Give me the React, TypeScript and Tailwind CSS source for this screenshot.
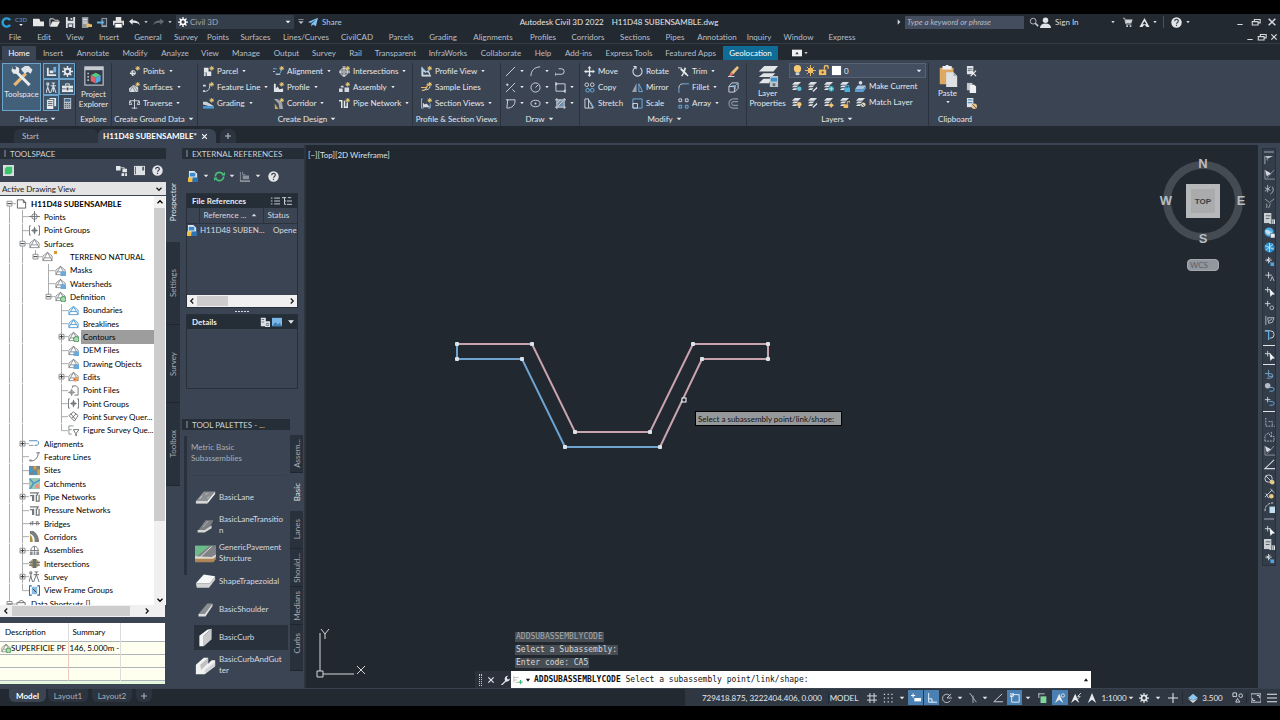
import React from 'react';

const star = <path d="M9.500 0v5M7 2.500h5M7.800.8l3.400 3.400M11.200.8L7.800 4.200" stroke="#f3cf72" strokeWidth="1" />;

const house = <path d="M1 10.500V5.500L6 1.500l5 4v5zM1 10.500l5-9 5 9M3 7.500l6 0" fill="none" stroke="#6d7074" strokeWidth=".8" />;

const sheets = (
  <g fill="#dfe3e7">
    <path d="M4 1h7L8 4H1z" />
    <path d="M3 5h5L6 6.800H1zM3 8h4L5.500 9.800H1z" />
  </g>
);

const lane = (fill: string) => (
  <>
    <path d="M1 16L10 5h13l-9 11z" fill={fill} />
    <path d="M1 16h13v3H1z" fill="#d5d6d6" />
    <path d="M14 16L23 5v3l-9 11z" fill="#f1f1f1" />
    <path d="M5 14l3-4M12 9l2-2M14 13l2-2" stroke="#d5d6d6" />
  </>
);

const line = (d: string, color = '#d5dae0', width = 1) => <path d={d} fill="none" stroke={color} strokeWidth={width} />;

const icons: Record<string, React.ReactNode> = {
  caret: <path d="M2.500 4h7L6 8z" fill="currentColor" />,
  dot: <path d="M3.500 4.500h5L6 8z" fill="currentColor" />,
  logo: <path d="M10 3.500A4.500 4.500 0 1 0 10 8.500" fill="none" stroke="#2d9fd8" strokeWidth="2.600" />,
  newFile: <path d="M0 2h7l1 3h4v5H0z" fill="#e6e6e6" />,
  open: <><path d="M1 10V2h4l1 1.500h4V5" fill="none" stroke="#e6e6e6" /><path d="M1 10.500L3.500 5H12l-3 5.500z" fill="#e6e6e6" /></>,
  save: <><path d="M1 0h10v12H1z" fill="#dcdfe3" /><path d="M3 0h6v4H3zM3 7h6v5H3z" fill="#29323d" /><path d="M4 8h4v3H4zM6 1h2v2H6z" fill="#dcdfe3" /></>,
  saveAs: <><path d="M1 0h7v12H1z" fill="#8e959d" /><path d="M2 2h5v1H2zM2 4h5v1H2zM2 6h5v1H2z" fill="#f0f0f0" /><path d="M6 7h3l1 1h2v3H6z" fill="#eabb60" /></>,
  mobile: <><path d="M5 1h6v10H5z" fill="#9aa3ad" /><path d="M6 2h4v7H6z" fill="#343d49" /><path d="M0 5h5V3l3 3-3 3V7H0z" fill="#62aee2" /></>,
  print: <><path d="M3 0h6v4H3zM0 4h12v5H0z" fill="#e4e4e4" /><path d="M2 7h8v5H2z" fill="#fff" stroke="#333c48" /><path d="M9 5h2v1H9z" fill="#df9d43" /></>,
  undo: <path d="M0 5l4-3.500v2.300c5 0 7 1.600 8 5.200-2-2.500-4-3-8-2.800v2.300z" fill="#e5e8eb" />,
  redo: <path d="M12 5L8 1.500v2.300C3 3.800 1 5.400 0 9c2-2.500 4-3 8-2.800v2.300z" fill="#626b76" />,
  gear: <><circle cx="6" cy="6" r="3" fill="none" stroke="currentColor" strokeWidth="2" /><path d="M6 0v2.500M6 9.500V12M0 6h2.500M9.500 6H12M1.800 1.800l1.700 1.700M8.500 8.500l1.700 1.700M10.200 1.800L8.500 3.500M3.500 8.500l-1.700 1.700" stroke="currentColor" strokeWidth="1.500" /></>,
  custom: <><path d="M2 2h8v1H2z" fill="currentColor" /><path d="M2 5h8L6 9z" fill="currentColor" /></>,
  plane: <path d="M0 6l12-5-2.500 10-3.500-2-2 2.500V8l6-5-7 4.300z" fill="#7fc3f2" />,
  right: <path d="M4 2l4 4-4 4z" fill="currentColor" />,
  search: <><circle cx="5" cy="5" r="3.500" fill="none" stroke="#c6cbd1" /><path d="M7.500 7.500L11 11" stroke="#c6cbd1" strokeWidth="2" /></>,
  user: <><circle cx="6" cy="3.500" r="3" fill="#e0e4e8" /><path d="M0 12c0-3 2-5 6-5s6 2 6 5z" fill="#e0e4e8" /></>,
  cart: <><path d="M0 1.500h2l1.500 7H10" fill="none" stroke="#cfd4da" /><path d="M2.500 3H11.500L10 7.500H3.500z" fill="#cfd4da" /><path d="M4 10h2v2H4zM8 10h2v2H8z" fill="#cfd4da" /></>,
  autodesk: <path d="M6 1l5.500 10H8.500L6 8.500 3.500 11H.5zM6 4.500L4 8h4z" fill="#e2e5e9" fillRule="evenodd" />,
  help: <><circle cx="6" cy="6" r="5.700" fill="#e3e5e8" /><path d="M4 4.500C4 2 8 2 8 4.400 8 6 6 5.800 6 7.400M6 8.500v1.300" fill="none" stroke="#3a4350" strokeWidth="1.300" /></>,
  min: <path d="M2 9h8v1.500H2z" fill="currentColor" />,
  restore: <path d="M4 5V3h7v4H9M1.500 5.500h7v4h-7z" fill="none" stroke="currentColor" strokeWidth="1.300" />,
  close: <path d="M2 2l8 8M10 2l-8 8" stroke="currentColor" strokeWidth="1.800" />,
  plus: <path d="M6 2.500v7M2.500 6h7" stroke="currentColor" strokeWidth="1.300" />,
  bigPlus: <path d="M6 0v12M0 6h12" stroke="currentColor" strokeWidth="1.300" />,
  ribbonBox: <><path d="M0 2h12v8H0z" fill="#eef0f2" /><path d="M4 7.500h4L6 4.500z" fill="#333c48" /></>,

  palette1: <><path d="M1 2h2v7h8v2H1zM4 5h4v3H4z" fill="#e4e7ea" /><path d="M8 1h3v6H8z" fill="#6db0e2" /></>,
  survey: <path d="M1 1h2v2H1zM2 3v3M6 1h4M8 1v3M5 4h6M8 4L5 12M8 4l3 8M8 4v7M2 5L0 12M2 6l2 6" fill="none" stroke="#d8dde2" strokeWidth="1.100" />,
  toolbox: <><path d="M0 4h12v7H0z" fill="#e4e7ea" /><path d="M4 4V2h4v2M0 7h12" fill="none" stroke="#e4e7ea" /><path d="M0 7h4v1H0zM8 7h4v1H8zM5 6h2v3H5z" fill="#3a4554" /></>,
  form: <><path d="M1 2h7v10H1zM4 0h7v9H9V1H4z" fill="#e8eaec" /><path d="M2 4h5M2 6h5M2 8h5" stroke="#5b646f" /></>,
  calc: <><path d="M2 0h8v12H2z" fill="#b9bfc6" /><path d="M3 1h6v3H3z" fill="#3f6c96" /><path d="M3 6h6M3 8h6M3 10h6" stroke="#4c545e" strokeDasharray="1.500 .7" /></>,

  points: <>{line('M4 5v6M1 8h6', '#e0e4e8', 1.2)}<circle cx="4.500" cy="7.500" r="2.500" fill="none" stroke="#e0e4e8" />{star}</>,
  surfaces: <><path d="M0 7l5-4 5 3v5H0z" fill="#d7dbdf" /><path d="M0 11l4-6 3 6M5 3l5 8" stroke="#5b6470" strokeWidth=".7" fill="none" />{star}</>,
  traverse: line('M6 1v11M1 3h10M1 3L0 7h3zM11 3L9 7h3zM3 11h6', '#d5dae0'),
  parcel: <><path d="M1 2h5v4h3v5H4V7H1z" fill="#e4e7ea" /><path d="M1 7h2v4H1z" fill="#d5dae0" />{star}</>,
  feature: <>{line('M1 10c5 1 7-3 6-8')}<path d="M0 3h3v2H0zM0 9h2v2H0z" fill="#d5dae0" />{star}</>,
  grading: <><path d="M0 4l4 0 8 5H7L0 7z" fill="#cdd2d7" /><path d="M0 9l12 0v2.500H0z" fill="#4ba0dc" />{star}</>,
  alignment: <>{line('M0 3h4M3 8c3 3 7-1 5-4', '#63b4ee')}{line('M0 6h2M3 9h5')}{star}</>,
  profile: <><path d="M1 2v9h10V7L7 8 5 5 3 7V2z" fill="#e0e3e7" />{star}</>,
  corridor: <><path d="M1 1l5 5 1 6h4L10 6 5 1z" fill="#a0a5aa" /><path d="M2 12V6l4 6z" fill="#c6a75b" />{star}</>,
  intersection: <><path d="M4 0h3v12H4zM0 5h12v3H0z" fill="#a0a5aa" /><circle cx="5.500" cy="6.500" r="4" fill="none" stroke="#d5d8dc" />{star}</>,
  assembly: <><path d="M0 7h4v4H0zM6 6h5v5H6zM2 4h3v2H2z" fill="#d5dae0" />{star}</>,
  pipe: <>{line('M0 3h3v8M6 3v8M6 10h3V5', '#e4e7ea', 1.6)}{star}</>,
  profileView: <><path d="M1 1v10h10M2 10V5l3 2 3-2 2 5z" fill="#8ec2e8" stroke="#dfe4e8" />{star}</>,
  sample: <>{line('M0 6h6M1 9c4 1 6-3 6-7', '#eab66a', 1.3)}{line('M4 8c3 1 5 0 6-3')}{star}</>,
  section: <><path d="M2 10V5l2 2 2-1 4 4z" fill="#d5dae0" />{line('M2 1H.5v10H3M10 6v5H8', '#8ec2e8')}{star}</>,

  drawLine: line('M1 11L11 1'),
  arc: line('M1 11C1 5 5 1 11 1'),
  polyline: line('M0 9h7a3 3 0 0 0 0-6H4M0 7v4'),
  construct: line('M1 11L11 1M1 3h3M2.500 1.500v3M8 8l3 3'),
  circle: <><circle cx="6" cy="6" r="5" fill="none" stroke="#d5dae0" />{line('M6 6l3-3')}</>,
  rect: line('M1 2h10v8H1zM0 1h2v2H0zM10 9h2v2h-2z'),
  poly: line('M2 2h9c0 6-3 9-9 9M1 2h2l-1 9'),
  ellipse: <><ellipse cx="6" cy="6" rx="5" ry="3.500" fill="none" stroke="#d5dae0" /><circle cx="6" cy="6" r="1" fill="#d5dae0" /></>,
  hatch: <><path d="M2 2h8v8H2z" fill="#6f8ca6" />{line('M2 0v12M10 0v12M0 2h12M0 10h12M2 6l4-4M3 9l6-6')}</>,
  move: <path d="M6 0l2 2.500H6.700V5.300H9.500V4L12 6 9.500 8V6.700H6.700V9.500H8L6 12 4 9.500h1.300V6.700H2.500V8L0 6l2.500-2v1.300h2.800V2.500H4z" fill="#e4e7ea" />,
  rotate: <>{line('M3 2a5 5 0 1 0 6 0', '#d5dae0', 1.2)}<path d="M1 0h4v4z" fill="#d5dae0" /></>,
  trim: <><path d="M3 3l6 6M8 2L6 8" stroke="#e4e7ea" strokeWidth="2" /><path d="M6 8l-2 3M8 8l3 3" stroke="#e4e7ea" strokeWidth="1.500" />{line('M0 2h4')}</>,
  copy: <><circle cx="3" cy="3" r="2" fill="none" stroke="#d5dae0" /><circle cx="9" cy="3" r="2" fill="none" stroke="#d5dae0" /><circle cx="4" cy="9" r="2" fill="none" stroke="#6cb4e8" /><circle cx="9" cy="9" r="2" fill="none" stroke="#6cb4e8" /></>,
  mirror: <><path d="M5 1v10H0z" fill="#99a2ac" /><path d="M7.500 2v8.500H11.500z" fill="none" stroke="#6cb4e8" /></>,
  fillet: <>{line('M1 12V7', '#6cb4e8')}{line('M1 7c0-4 2-5 5-5')}{line('M6 2h6', '#6cb4e8')}</>,
  stretch: <>{line('M1 1v10h4V1zM5 2l5 9H5')}{line('M7 4l4 7', '#6cb4e8')}</>,
  scale: <>{line('M1 1h10v10H1z', '#6cb4e8')}{line('M1 6h5v5H1z')}</>,
  array: <>{line('M1 1h3v3H1zM8 1h3v3H8z')}{line('M1 8h3v3H1zM8 8h3v3H8z', '#6cb4e8')}</>,
  erase: <><path d="M10 0l2 2-6 7-3-2z" fill="#eec27a" /><path d="M3 7l3 2-3 2H1z" fill="#ef7361" /><path d="M0 11h7v1H0z" fill="#dde1e5" /></>,
  explode: <>{line('M1 5h6v6H1zM1 5l3-4h7v6l-4 4')}{line('M7 5l4-4M4 4h4v4', '#6cb4e8')}</>,
  offset: line('M11 1H6a5 5 0 0 0 0 10h5M11 4H6a2 2 0 0 0 0 4h5', '#8b96a3', 1.2),

  bulb: <><circle cx="6" cy="4" r="4" fill="#f7ca74" /><path d="M4 8h4v3H4z" fill="#cdd1d5" /></>,
  sun: <><circle cx="6" cy="6" r="3" fill="#f3bd61" />{line('M6 0v12M0 6h12M2 2l8 8M10 2l-8 8', '#f3bd61')}</>,
  unlock: <><path d="M1 5h8v6H1z" fill="#f3bd61" />{line('M7 5V2.500a2 2 0 0 1 4 0V4', '#f3bd61', 1.5)}<path d="M4 7h2v2H4z" fill="#574729" /></>,
  white: <path d="M1 1h10v10H1z" fill="#fff" />,
  layOff: <>{sheets}<circle cx="9" cy="8.500" r="2.500" fill="#57c4d8" /></>,
  layIso: <>{sheets}<path d="M6 11l5-5v2l-4 4z" fill="#e7eaee" /></>,
  layFreeze: <>{sheets}<circle cx="9" cy="8.500" r="3" fill="#37a4b5" />{line('M9 6v5M6.500 8.500h5', '#c8f0f6', .8)}</>,
  layLock: <>{sheets}<path d="M6 7h6v5H6z" fill="#47b4dd" />{line('M7.500 7V5h3v2', '#47b4dd')}</>,
  layOn: <>{sheets}<circle cx="9" cy="8" r="2.500" fill="#f4c76f" /><path d="M8 10h2v2H8z" fill="#ddd" /></>,
  layThaw: <>{sheets}<circle cx="9" cy="9" r="2" fill="#f4c76f" />{line('M9 5.500v6.500M5.500 9H12', '#f4c76f', .8)}</>,
  layUnlock: <>{sheets}<path d="M5 8h5v4H5z" fill="#f3bd61" />{line('M9 8V5h3v2', '#f3bd61')}</>,
  layCurrent: <><circle cx="6" cy="2" r="2" fill="#d9dde1" /><path d="M3 5h9L9 9H0z" fill="#a5c6e1" /><path d="M0 9h9l3-4v3l-3 4H0z" fill="#5c9fd1" /></>,
  layMatch: <>{sheets}<circle cx="9" cy="8.500" r="2.500" fill="#e8d6b4" /><path d="M7 7l4 4" stroke="#575f69" /></>,
  cut: <><path d="M1 0h7v9H1z" fill="#dfe2e6" />{line('M2 3h5M2 5h5', '#59626d')}{line('M5 5l6 6M11 5l-6 6', '#f3f4f5', 1.2)}</>,
  copyClip: <><path d="M1 1h6v8H1z" fill="#bfc5cb" /><path d="M4 3h5l2 2v7H4z" fill="#eef0f1" /></>,
  pasteSpec: <><path d="M1 0h7v10H1z" fill="#dfe2e6" />{line('M2 2h5M2 5h5', '#4f91c4', 1.3)}<circle cx="9" cy="9" r="3" fill="#e9c58b" /><path d="M7 7l4 4" stroke="#59626d" /></>,

  green: <><path d="M0 0h12v12H0z" fill="#d8dfe0" /><path d="M2 4l2-2h6v6l-2 2H2z" fill="#39c36b" /></>,
  panes: <><path d="M0 1h5v5H0zM7 4h5v4H7zM6 9h3v3H6zM10 9h2v3h-2z" fill="#e4e7ea" />{line('M5 3h4v2')}</>,
  sidebar: <><path d="M0 1h12v10H0z" fill="#dfe2e5" /><path d="M9 2h2v4H9zM1 2h1v8H1z" fill="#505965" /></>,
  file: line('M1.500 2H8l2.500 3v6h-9zM8 2v3h3', '#565b61'),
  pt: <><circle cx="6" cy="6" r="3" fill="none" stroke="#6d7074" />{line('M6 0v12M0 6h12', '#6d7074')}</>,
  ptGroup: <><circle cx="6" cy="6" r="2" fill="none" stroke="#6d7074" />{line('M6 2v8M2.500 6h7M2 1H.5v10H2M10 1h1.500v10H10', '#6d7074')}</>,
  house,
  houseBlue: <>{house}<path d="M6 7h6v5H6z" fill="#6aa9da" /></>,
  houseGreen: <>{house}<circle cx="9" cy="9" r="3" fill="#a7dbaf" stroke="#3d8d4e" /></>,
  houseLine: line('M1 10.500V5.500L6 1.500l5 4v5zM1 10l5-8 5 8M3 7h6', '#4f9ad2'),
  houseEdit: <>{house}<path d="M6 10l4-4 2 2-4 4z" fill="#eba44c" /><path d="M6 8h2v2H6z" fill="#dd4f45" /></>,
  pointFile: <>{line('M5 3V1h4l2 2v8H7', '#6d7074')}{line('M4 4v8M0 8h8M2 8a2 2 0 1 0 4 0 2 2 0 1 0-4 0', '#6d7074', .8)}</>,
  query: line('M1 5l5-4 5 4-4 6zM3 3l5 6M4 8l5-5', '#6d7074'),
  figure: <>{line('M1 1v9h3M1 1h5M1 5h3', '#8a8e92')}{line('M6 5h6L9 9v3L8 9z', '#6d7074')}</>,
  tAlign: <>{line('M0 3h9a3 3 0 0 1 0 5H6', '#4785b5')}{line('M0 8h5', '#8a8e92')}</>,
  tFeature: line('M1 11c5 0 9-3 9-9M8 2h4M0 10h3', '#64686c'),
  tSites: <><path d="M0 1h12v10H0z" fill="#77858a" /><path d="M0 1l5 5-5 4zM5 8h3v3H5z" fill="#3e9ad3" /><path d="M5 1h3v4H5zM9 5h3v6H9z" fill="#d4a348" /></>,
  tCatch: <><path d="M0 0h12v12H0z" fill="#9bcbb6" />{line('M1 12L5 6 1 1M5 6l7-4', '#4692c8', 1.5)}<path d="M7 7h4v4H7z" fill="#e6957d" /></>,
  tPipe: line('M1 2h8v3M1 5h3v6M5 4v7M8 4v7h3V4M6 2h5', '#74777b', 1.4),
  tBridge: line('M0 6h12M2 4v4M4 4v4M8 4v4M10 4v4M3 4h2M8 4h2', '#74777b'),
  tCorridor: <><path d="M1 0h4c4 3 6 7 6 12H6C7 7 4 4 1 3z" fill="#7c7f7d" /><path d="M1 4c3 2 3 5 3 8H1z" fill="#a89143" /></>,
  tAssembly: <><path d="M1 7h3v4H1zM8 7h3v4H8zM5 7h2v4H5z" fill="#8d9195" />{line('M2 6c0-6 8-6 8 0M1 6h10M6 1v6', '#74777b')}</>,
  tInter: <><circle cx="6" cy="6" r="5" fill="#b9ac82" /><path d="M4 1h4v10H4zM0 4h12v1.500H0zM0 7h12v1.500H0z" fill="#6f7069" /></>,
  tSurvey: line('M1 1h2v2H1zM2 3v4M6 1h4M8 1v3M5 4h6M8 4L5 12M8 4l3 8M2 5L0 12M2 6l2 6', '#64686c'),
  tFrame: <><path d="M3 2h6v8H3z" fill="#86bde6" />{line('M3 1H.5v10H3M9 1h2.500v10H9', '#2e6b9c', 1.2)}<path d="M4 4l4 4" stroke="#333" /></>,
  tData: line('M1 10V4h9v6M3 4c0-3 5-3 6 0M1 8h10', '#64686c'),

  dwg: <><path d="M1 0h6l3 3v6H1z" fill="#dce7f0" /><path d="M2 2h6v4H2z" fill="#3a8ccc" /><path d="M0 7h5v5H0z" fill="#f1bd45" /><path d="M5 7h6v5H5z" fill="#2c73b4" /></>,
  refresh: <>{line('M1.500 6A4.500 4.500 0 0 1 10 4M10.500 6A4.500 4.500 0 0 1 2 8', '#49c27a', 1.7)}<path d="M8 5h4V1zM4 7H0v4z" fill="#49c27a" /></>,
  path: <><path d="M1 1h1v9h10v2H1zM4 5h7v4H4z" fill="#89919b" />{line('M4 1v3h3', '#89919b')}</>,
  list: line('M1 2.500h2M5 2.500h7M1 6h2M5 6h7M1 9.500h2M5 9.500h7', '#d5dae0', 1.1),
  treeList: line('M0 2h5M3 2v8h2M3 6h2M6 6h6M6 10h6M7 2h4', '#d5dae0', 1.1),
  details: <><path d="M1 1h6v10H1zM6 5h6v7H6z" fill="#dfe2e5" />{line('M2 3h3M2 6h3M7 8h4M7 10h4', '#58616c')}</>,
  preview: <><path d="M0 1h12v10H0z" fill="#7ab7e6" /><path d="M0 11l4-5 3 3 2-2 3 4z" fill="#3f83b8" /></>,
  chevUp: line('M3 7.500l3-3 3 3', 'currentColor', 1.5),
  chevDown: line('M3 4.500l3 3 3-3', 'currentColor', 1.5),
  chevLeft: line('M7.500 3l-3 3 3 3', 'currentColor', 1.5),
  chevRight: line('M4.500 3l3 3-3 3', 'currentColor', 1.5),

  wrench: <path d="M1 12l5-5C5 4 6 1 10 1L8 3l1 2h2l1-1c0 3-2 4-5 4l-5 5z" fill="currentColor" />,
  prompt: <>{line('M1 1v8M1 3h6M1 6h4M3 9h3', '#b3b7bb')}{line('M9 6v5M6.500 8.500h5', '#43b871', 1.3)}</>,

  tri1: <><path d="M1 1h9L4 4z" fill="#bcc2c9" />{line('M1 1v9M3 4l1 2', '#a9b0b8')}</>,
  tri2: <><path d="M1 1l7 4-5 3z" fill="#d5dae0" />{line('M1 1v10h11M3 10l8-9', '#8d959f')}</>,
  ptStar: <path d="M4 1v8M1 4l6 3M1 8l6-5M9 3c2 3 1 6-2 8" fill="none" stroke="#b4bbc3" />,
  ptPath: line('M1 1l5 4 5-4M3 6v5M7 6l-2 5', '#9ca4ad'),
  ptSheet: <><path d="M0 0h8v11H0z" fill="#c9ced3" />{line('M2 3h5M2 6h4', '#535c68')}<path d="M6 7h6v5H6z" fill="#dfe2e6" />{line('M8 7v5M10 7v5', '#535c68')}</>,
  globe: <><circle cx="5.500" cy="5.500" r="5" fill="#49a9e2" /><path d="M1 4c4-3 5 2 8 1L7 9 3 8z" fill="#b9e0f5" /><path d="M7 7h5v5H7z" fill="#e8ebee" stroke="#3b4453" strokeWidth=".6" /></>,
  globe2: <><circle cx="6" cy="6" r="5.500" fill="#2f93d1" />{line('M1 4l10 4M2 9l8-7M6 1v10', '#b9e0f5')}</>,
  ptBlue: <>{line('M5 1v7M1.500 4.500h7M3 3l4 4M7 2L3 6')}<path d="M7 7h4v4H7z" fill="#4fa3df" /></>,
  ptA: <>{line('M5 1v7M1.500 4.500h7')}{line('M7 11l2-5 2 5', '#b7bec6')}</>,
  ptCursor: <>{line('M4 1v6M1 4h6')}<path d="M6 3l6 6-3 .5-2 2.500z" fill="#f1f3f4" /></>,
  ptSearch: <>{line('M4 1v6M1 4h6')}<circle cx="8.500" cy="8.500" r="2" fill="none" stroke="#b7bec6" /></>,
  ptFlag: <>{line('M2 1v10M4 3h7l-2 5-4 1z', '#b4bbc3')}{line('M5 7l4-3', '#b4bbc3')}</>,
  dashCurve: <>{line('M1 2h6a3.500 3.500 0 0 1 0 8H6')}{line('M1 2h4v10', '#65aee0', 1.3)}</>,
  dashLoop: line('M5 1v7h5M1 5h6a2.500 2.500 0 0 1 0 5H3', '#79a9cc'),
  ptLoop: <>{line('M4 1v6M1 4h6')}<path d="M6 6h3a2 2 0 0 1 0 4H6" fill="none" stroke="#65aee0" /></>,
  discLoop: <><circle cx="4" cy="4" r="3" fill="#b4bbc3" /><path d="M6 6h3a2 2 0 0 1 0 4H6" fill="none" stroke="#65aee0" /></>,
  dashAngle: <path d="M2 1v9h10M5 5h4v5" fill="none" stroke="#a7bac6" strokeDasharray="2 1" />,
  dashBox: <path d="M1 11V5l4-3 2 4h4v5zM8 1v5" fill="none" stroke="#a7bac6" strokeDasharray="2 1" />,
  noCircle: <><circle cx="5" cy="5" r="4" fill="none" stroke="#d5dae0" />{line('M2 2l6 6')}<circle cx="9" cy="9" r="2.500" fill="#e9c884" /></>,
  ptGold: <>{line('M1 10l8-8M2 6l3 5M7 1l4 4')}<circle cx="8" cy="9" r="2.500" fill="#e9c884" /></>,
  curveCalc: <><path d="M1 10C1 5 4 1 10 1" fill="none" stroke="#d5dae0" strokeDasharray="3 1" /><path d="M6 5h6v7H6z" fill="#c1def2" /></>,

  grid: line('M3.500 0v12M8.500 0v12M0 3.500h12M0 8.500h12', '#d5dae0', 1.2),
  snap: <path d="M1 1.500h11M1 6h11M1 10.500h11" stroke="#d5dae0" strokeWidth="1.500" strokeDasharray="1.500 3" />,
  dyn: <>{line('M0 3h5M2.500.5v5', '#fff', 1.2)}<path d="M4 6h8v4H4z" fill="#fff" /></>,
  ortho: line('M2 0v11h10M2 7h4v4', '#e8f3fb', 1.2),
  polar: line('M10 4a5 5 0 1 0 0 5M6 6h6M6 6l5-5'),
  iso: line('M2 0l8 11M6 3v9', '#a6aeb7', 1.2),
  angle: line('M11 1L1 10.500h11', '#d5dae0', 1.1),
  osnap: line('M2 2h9v9H2zM0 0h4v4H0z', '#e8f3fb', 1.1),
  quick: <><path d="M3 4h7v8H3z" fill="#7fd79a" />{line('M0 1h8M1 1v5', '#d5dae0')}</>,
  anno: <><path d="M5 1l5 11-5-4-5 4z" fill="#e7eaed" /><circle cx="9.500" cy="3" r="2" fill="none" stroke="#e7eaed" /></>,
  annoAuto: <><path d="M5 1l5 11-5-4-5 4z" fill="#e7eaed" />{line('M12 0L8 4h3L7 8', '#e7eaed')}</>,
  annoPlain: <path d="M6 0l5 12-5-4-5 4z" fill="#e7eaed" />,
  isolate: <>{line('M1 1h4v4H1zM4 11l2-4 2.500 4z', '#d5dae0')}<circle cx="9.500" cy="4" r="2" fill="none" stroke="#d5dae0" /></>,
  stack: <><path d="M0 6l6-5 6 5-6 3z" fill="#8cc7ed" /><path d="M0 7l6 5 6-5-6 2z" fill="#d6dce1" /></>,
  clean: line('M0 1h12v10H0zM2 9V6M2 9h3M10 3v3M7 3h3', '#d5dae0', 1.1),
  menu: line('M0 1.500h12M0 6h12M0 10.500h12', '#e7eaed', 1.4),
};

const Icon: React.FC<{ name: string; className?: string }> = ({ name, className = 'size-3' }) => (
  <svg viewBox="0 0 12 12" className={`shrink-0 ${className}`} aria-hidden="true">{icons[name]}</svg>
);

const IconButton: React.FC<{ name: string; className?: string; icon?: string }> = ({ name, className = '', icon = 'size-[11px]' }) => (
  <button aria-label={name} className={`flex shrink-0 items-center justify-center ${className}`}>
    <Icon name={name} className={icon} />
  </button>
);

const menus = [
  ['File', 'w-[30px]'], ['Edit', 'w-[28px]'], ['View', 'w-[34px]'], ['Insert', 'w-[34px]'], ['General', 'w-[44px]'],
  ['Survey', 'w-[32px]'], ['Points', 'w-[32px]'], ['Surfaces', 'w-[43px]'], ['Lines/Curves', 'w-[58px]'], ['CivilCAD', 'w-[44px]'],
  ['Parcels', 'w-[44px]'], ['Grading', 'w-[40px]'], ['Alignments', 'w-[60px]'], ['Profiles', 'w-[40px]'], ['Corridors', 'w-[50px]'],
  ['Sections', 'w-[44px]'], ['Pipes', 'w-[36px]'], ['Annotation', 'w-[48px]'], ['Inquiry', 'w-[36px]'], ['Window', 'w-[43px]'], ['Express', 'w-[44px]'],
];

const ribbonTabs = [
  ['Home', 'w-[34px]'], ['Insert', 'w-[34px]'], ['Annotate', 'w-[46px]'], ['Modify', 'w-[38px]'], ['Analyze', 'w-[42px]'],
  ['View', 'w-[28px]'], ['Manage', 'w-[44px]'], ['Output', 'w-[37px]'], ['Survey', 'w-[38px]'], ['Rail', 'w-[25px]'],
  ['Transparent', 'w-[55px]'], ['InfraWorks', 'w-[50px]'], ['Collaborate', 'w-[56px]'], ['Help', 'w-[28px]'], ['Add-ins', 'w-[43px]'],
  ['Express Tools', 'w-[58px]'], ['Featured Apps', 'w-[65px]'], ['Geolocation', 'w-[55px]'],
];

const TitleBar = () => (
  <header className="flex h-4 shrink-0 items-center">
    <div className="flex flex-1 items-center">
      <IconButton name="logo" className="w-3" />
      <button className="flex w-[18px] flex-col items-center text-[6px] leading-[5px] font-bold text-[#4c80b3]">
        C3D
        <Icon name="caret" className="size-1.5 text-white" />
      </button>
      <div className="flex items-center">
        {['newFile', 'open', 'save', 'saveAs', 'mobile', 'print', 'undo'].map(name => (
          <IconButton key={name} name={name} className="w-4" />
        ))}
        <IconButton name="dot" className="w-2" icon="size-2" />
        <IconButton name="redo" className="w-4" />
        <IconButton name="dot" className="w-2" icon="size-2" />
      </div>
      <label className="ml-0.5 flex h-3.5 w-[118px] items-center bg-[#343d4a] px-0.5 text-white">
        <Icon name="gear" className="size-2.5" />
        <select aria-label="Workspace" className="ml-0.5 flex-1 appearance-none text-[#a4abb4]">
          <option>Civil 3D</option>
        </select>
        <Icon name="caret" className="size-2" />
      </label>
      <IconButton name="custom" className="w-3.5" icon="size-2" />
      <button className="flex items-center gap-1 text-[#9fd0f3]">
        <Icon name="plane" className="size-2.5" />
        Share
      </button>
    </div>
    <p className="mr-[42px] flex gap-2 text-[#e2e5e9]">
      <span>Autodesk Civil 3D 2022</span>
      <span>H11D48 SUBENSAMBLE.dwg</span>
    </p>
    <div className="flex flex-1 items-center justify-end text-[#d5dae0]">
      <IconButton name="right" className="w-3" icon="size-2" />
      <input aria-label="Search help" placeholder="Type a keyword or phrase" className="mr-1 h-[13px] w-[119px] bg-[#434d5e] px-0.5 italic placeholder:text-[#b5bbc4]" />
      <IconButton name="search" className="w-3" icon="size-2.5" />
      <button className="flex w-[67px] items-center gap-1">
        <Icon name="user" className="size-[11px]" />
        Sign In
      </button>
      <IconButton name="dot" className="w-3" icon="size-2" />
      <IconButton name="cart" className="w-[18px]" icon="size-2.5" />
      <IconButton name="autodesk" className="w-3.5" />
      <IconButton name="dot" className="w-2" icon="size-2" />
      <span className="mx-1 h-3 w-px bg-[#4a525d]" />
      <IconButton name="help" className="w-4" />
      <IconButton name="dot" className="w-2" icon="size-2" />
      <IconButton name="min" className="ml-10 w-4" icon="size-2" />
      <IconButton name="restore" className="w-4" icon="size-2.5" />
      <IconButton name="close" className="w-4" icon="size-2.5" />
    </div>
  </header>
);

const Row: React.FC<{ icon: string; label?: string; caret?: boolean; className?: string }> = ({ icon, label, caret, className = '' }) => (
  <button aria-label={label ?? icon} className={`flex h-4 items-center whitespace-nowrap ${className}`}>
    <Icon name={icon} className="size-[11px]" />
    {label && <span className="ml-[3px]">{label}</span>}
    {caret && <Icon name="dot" className="ml-0.5 size-2" />}
  </button>
);

interface GroupProps {
  title: string;
  className: string;
  caret?: boolean;
  children: React.ReactNode;
}

const Group: React.FC<GroupProps> = ({ title, className, caret, children }) => (
  <section className={`flex shrink-0 flex-col border-r border-[#2b333e] ${className}`}>
    <div className="flex h-12">{children}</div>
    <h2 className="flex h-[15px] items-center justify-center whitespace-nowrap">
      {title}
      {caret && <Icon name="caret" className="ml-0.5 size-2" />}
    </h2>
  </section>
);

const Ribbon = () => (
  <div className="flex h-[66px] shrink-0 bg-[#3b4453] pt-[3px] text-[#e4e8ec]">
    <Group title="Palettes" caret className="w-[76px] pl-0.5">
      <button className="flex w-[39px] flex-col items-center justify-between border border-[#6ba3cc] bg-[#43607b] pt-px pb-2.5">
        <svg viewBox="0 0 24 24" className="size-6" aria-hidden="true">
          <path d="M4 21L16 9" stroke="#eab676" strokeWidth="3.500" />
          <path d="M11 4l4-3h4l4 4-2 4-3-2-3 2-3-3z" fill="#dfe3e6" />
          <path d="M6 7l14 14" stroke="#e7eaec" strokeWidth="3" />
          <path d="M2 1v3l3 1 1-2-1-2 4 2v4L7 9H3L1 6z" fill="#e7eaec" />
        </svg>
        Toolspace
      </button>
      <div className="ml-0.5 grid grid-cols-2 grid-rows-3">
        {['palette1', 'gear', 'survey', 'toolbox', 'form'].map(name => (
          <IconButton key={name} name={name} className="w-4 border border-[#6ba3cc] bg-[#3d5368]" />
        ))}
        <IconButton name="calc" className="w-4" />
      </div>
    </Group>
    <Group title="Explore" className="w-[36px]">
      <button className="flex w-full flex-col items-center pt-[3px] leading-[10px]">
        <svg viewBox="0 0 24 24" className="mb-[3px] size-5 shrink-0" aria-hidden="true">
          <path d="M1 1h22v22H1z" fill="#313a46" stroke="#b5bbc3" strokeWidth="1.500" />
          <path d="M1 1h22v4H1z" fill="#c5cad0" />
          <path d="M4 8h2v2H4zM4 12h2v2H4zM4 16h2v2H4z" fill="#b5bbc3" />
          <path d="M8 11l6-3 6 3-6 3z" fill="#59c981" />
          <path d="M8 11l6 3v7l-6-3z" fill="#e2606a" />
          <path d="M20 11l-6 3v7l6-3z" fill="#51a8e2" />
        </svg>
        Project Explorer
      </button>
    </Group>
    <Group title="Create Ground Data" caret className="w-[86px]">
      <div className="pl-[17px]">
        <Row icon="points" label="Points" caret />
        <Row icon="surfaces" label="Surfaces" caret />
        <Row icon="traverse" label="Traverse" caret />
      </div>
    </Group>
    <Group title="Create Design" caret className="w-[215px] pl-[5px]">
      <div className="w-[70px]">
        <Row icon="parcel" label="Parcel" caret />
        <Row icon="feature" label="Feature Line" caret />
        <Row icon="grading" label="Grading" caret />
      </div>
      <div className="w-[66px]">
        <Row icon="alignment" label="Alignment" caret />
        <Row icon="profile" label="Profile" caret />
        <Row icon="corridor" label="Corridor" caret />
      </div>
      <div>
        <Row icon="intersection" label="Intersections" caret />
        <Row icon="assembly" label="Assembly" caret />
        <Row icon="pipe" label="Pipe Network" caret />
      </div>
    </Group>
    <Group title="Profile & Section Views" className="w-[88px]">
      <div className="pl-2">
        <Row icon="profileView" label="Profile View" caret />
        <Row icon="sample" label="Sample Lines" />
        <Row icon="section" label="Section Views" caret />
      </div>
    </Group>
    <Group title="Draw" caret className="w-[79px]">
      <div className="grid grid-cols-3 gap-x-1 pl-1">
        <Row icon="drawLine" caret />
        <Row icon="arc" caret />
        <Row icon="polyline" />
        <Row icon="construct" caret />
        <Row icon="circle" caret />
        <Row icon="rect" caret />
        <Row icon="poly" caret />
        <Row icon="ellipse" caret />
        <Row icon="hatch" caret />
      </div>
    </Group>
    <Group title="Modify" caret className="w-[167px] pl-1">
      <div className="w-[48px]">
        <Row icon="move" label="Move" />
        <Row icon="copy" label="Copy" />
        <Row icon="stretch" label="Stretch" />
      </div>
      <div className="w-[46px]">
        <Row icon="rotate" label="Rotate" />
        <Row icon="mirror" label="Mirror" />
        <Row icon="scale" label="Scale" />
      </div>
      <div className="w-[50px]">
        <Row icon="trim" label="Trim" caret />
        <Row icon="fillet" label="Fillet" caret />
        <Row icon="array" label="Array" caret />
      </div>
      <div>
        <Row icon="erase" />
        <Row icon="explode" />
        <Row icon="offset" />
      </div>
    </Group>
    <Group title="Layers" caret className="w-[182px]">
      <button className="flex w-[41px] shrink-0 flex-col items-center pt-0.5 leading-[10px]">
        <svg viewBox="0 0 24 24" className="mb-px size-[22px] shrink-0" aria-hidden="true">
          <path d="M8 1h15l-5 6H2zM7 9h13l-4 4H2zM7 15h9l-3 5H2z" fill="#e3e6e9" />
          <path d="M14 12h9v12h-9z" fill="#bcc4cc" />
          <path d="M15 14h7v4h-7z" fill="#3e92cc" />
          <path d="M17 20h3v3h-3z" fill="#626c78" />
        </svg>
        Layer Properties
      </button>
      <div className="flex-1 pr-0.5">
        <label className="ml-px flex h-[15px] items-center gap-0.5 border border-[#566173] bg-[#434e60] px-0.5">
          <Icon name="bulb" className="size-[11px]" />
          <Icon name="sun" className="size-[11px]" />
          <Icon name="unlock" className="size-[11px]" />
          <Icon name="white" className="size-[11px]" />
          <select aria-label="Layer" className="flex-1 appearance-none">
            <option>0</option>
          </select>
          <Icon name="caret" className="size-2" />
        </label>
        {[['layOff', 'layIso', 'layFreeze', 'layLock', 'layCurrent', 'Make Current'], ['layOn', 'layIso', 'layThaw', 'layUnlock', 'layMatch', 'Match Layer']].map(([a, b, c, d, e, label]) => (
          <div key={label} className="flex gap-[5px] pl-[3px]">
            <Row icon={a} />
            <Row icon={b} />
            <Row icon={c} />
            <Row icon={d} />
            <Row icon={e} label={label} />
          </div>
        ))}
      </div>
    </Group>
    <Group title="Clipboard" className="w-[52px] border-r-0">
      <button className="flex w-[37px] flex-col items-center pt-0.5 leading-[10px]">
        <svg viewBox="0 0 24 24" className="mb-px size-[22px]" aria-hidden="true">
          <path d="M3 3h15v18H3z" fill="#dfa862" />
          <path d="M6 1h3l1-1h2l1 1h3v4H6z" fill="#edf0f2" />
          <path d="M10 8h8l4 4v12H10z" fill="#dde1e4" />
          <path d="M18 8v4h4z" fill="#a7aeb5" />
        </svg>
        Paste
        <Icon name="dot" className="size-2" />
      </button>
      <div>
        <Row icon="cut" />
        <Row icon="copyClip" />
        <Row icon="pasteSpec" />
      </div>
    </Group>
  </div>
);

interface Node {
  label: string;
  depth: number;
  icon: string;
  box?: '+' | '-';
  last?: boolean;
  selected?: boolean;
}

const tree: Node[] = [
  { label: 'H11D48 SUBENSAMBLE', depth: 0, icon: 'file', box: '-' },
  { label: 'Points', depth: 1, icon: 'pt' },
  { label: 'Point Groups', depth: 1, icon: 'ptGroup' },
  { label: 'Surfaces', depth: 1, icon: 'house', box: '-' },
  { label: 'TERRENO NATURAL', depth: 2, icon: 'house', box: '-', last: true },
  { label: 'Masks', depth: 3, icon: 'houseBlue' },
  { label: 'Watersheds', depth: 3, icon: 'houseBlue' },
  { label: 'Definition', depth: 3, icon: 'houseGreen', box: '-', last: true },
  { label: 'Boundaries', depth: 4, icon: 'houseLine' },
  { label: 'Breaklines', depth: 4, icon: 'houseLine' },
  { label: 'Contours', depth: 4, icon: 'houseGreen', box: '+', selected: true },
  { label: 'DEM Files', depth: 4, icon: 'houseBlue' },
  { label: 'Drawing Objects', depth: 4, icon: 'houseBlue' },
  { label: 'Edits', depth: 4, icon: 'houseEdit', box: '+' },
  { label: 'Point Files', depth: 4, icon: 'pointFile' },
  { label: 'Point Groups', depth: 4, icon: 'ptGroup' },
  { label: 'Point Survey Quer...', depth: 4, icon: 'query' },
  { label: 'Figure Survey Que...', depth: 4, icon: 'figure', last: true },
  { label: 'Alignments', depth: 1, icon: 'tAlign', box: '+' },
  { label: 'Feature Lines', depth: 1, icon: 'tFeature' },
  { label: 'Sites', depth: 1, icon: 'tSites' },
  { label: 'Catchments', depth: 1, icon: 'tCatch' },
  { label: 'Pipe Networks', depth: 1, icon: 'tPipe', box: '+' },
  { label: 'Pressure Networks', depth: 1, icon: 'tPipe' },
  { label: 'Bridges', depth: 1, icon: 'tBridge' },
  { label: 'Corridors', depth: 1, icon: 'tCorridor' },
  { label: 'Assemblies', depth: 1, icon: 'tAssembly', box: '+' },
  { label: 'Intersections', depth: 1, icon: 'tInter' },
  { label: 'Survey', depth: 1, icon: 'tSurvey', box: '+' },
  { label: 'View Frame Groups', depth: 1, icon: 'tFrame', last: true },
];

const Guide: React.FC<{ d: string; box?: string }> = ({ d, box }) => (
  <svg viewBox="0 0 13 14" className="h-full w-[13px] shrink-0" preserveAspectRatio="none" aria-hidden="true">
    <path d={d} stroke="#a9abad" fill="none" />
    {box && <path d="M4 4.500h5v5H4z" fill="#fff" stroke="#8f9294" />}
    {box && <path d={box === '+' ? 'M4.500 7h4M6.500 5v4' : 'M4.500 7h4'} stroke="#333" />}
  </svg>
);

const TreeRow: React.FC<{ node: Node }> = ({ node }) => {
  const ancestors = Array.from({ length: node.depth }, (_, i) => i);
  const stub = node.depth === 0 ? 'M6.500 7v7M6.500 7h7' : node.last ? 'M6.500 0v7M6.500 7h7' : 'M6.500 0v14M6.500 7h7';
  return (
    <li className="flex min-h-0 flex-1 items-center pl-[3px] whitespace-nowrap">
      {ancestors.map(i => <Guide key={i} d={i < 2 ? 'M6.500 0v14' : ''} />)}
      <Guide d={stub} box={node.box} />
      <Icon name={node.icon} className="size-[11px]" />
      {node.depth === 2 && <span className="mb-2 ml-px w-3"><span className="block size-[3px] bg-[#d49a35]" /></span>}
      <span className={`ml-0.5 flex h-full items-center pl-0.5 ${node.depth === 0 ? 'font-bold' : ''} ${node.selected ? 'flex-1 bg-[#9d9d9d]' : ''}`}>{node.label}</span>
    </li>
  );
};

const SideTab: React.FC<{ label: string; active?: boolean; className?: string }> = ({ label, active, className = '' }) => (
  <button className={`flex items-center justify-center ${active ? 'text-[#dfe3e8]' : 'border-b border-[#1f262f] bg-[#29313c] text-[#a3aab4]'} ${className}`}>
    <span className="rotate-180 whitespace-nowrap [writing-mode:vertical-rl]">{label}</span>
  </button>
);

const PanelTitle: React.FC<{ title: string }> = ({ title }) => (
  <h2 className="flex h-[11px] shrink-0 items-center gap-1 bg-[#252d37] pl-1 whitespace-nowrap text-[#cdd2d8]">
    <span className="h-[7px] w-0.5 bg-[#59626e]" />
    {title}
  </h2>
);

const Toolspace = () => (
  <aside className="flex shrink-0 bg-[#3b4453]">
    <div className="flex w-[166px] flex-col pt-[3px] pb-1">
      <PanelTitle title="TOOLSPACE" />
      <div className="flex h-[23px] shrink-0 items-center gap-[7px] px-[3px]">
        <IconButton name="green" className="mr-auto" />
        <IconButton name="panes" />
        <IconButton name="sidebar" />
        <IconButton name="help" />
      </div>
      <label className="flex h-[13px] shrink-0 items-center bg-[#e4e4e4] px-0.5 text-[#1c1c1c]">
        <select aria-label="View" className="flex-1 appearance-none">
          <option>Active Drawing View</option>
        </select>
        <Icon name="chevDown" className="size-2.5" />
      </label>
      <div className="mt-px flex min-h-0 flex-1 bg-white text-black">
        <div className="flex-1 overflow-hidden pt-px">
          <ul className="flex h-[400px] flex-col">
            {tree.map((node, i) => <TreeRow key={i} node={node} />)}
          </ul>
          <div className="flex h-[14px] items-center pl-[3px]">
            <Guide d="M6.500 0v7h7" box="-" />
            <Icon name="tData" className="size-[11px]" />
            <span className="ml-1">Data Shortcuts []</span>
          </div>
        </div>
        <div className="mr-px flex w-[11px] flex-col items-center bg-[#f0f0f0]">
          <Icon name="chevUp" className="my-px size-2.5" />
          <div className="h-[313px] w-full bg-[#cdcdcd]" />
          <Icon name="chevDown" className="mt-auto size-2.5" />
        </div>
      </div>
      <div className="mr-px flex h-3 shrink-0 items-center bg-[#f0f0f0] text-[#161616]">
        <Icon name="chevLeft" className="mx-px size-2.5" />
        <div className="h-2.5 w-[118px] bg-[#cdcdcd]" />
        <Icon name="chevRight" className="ml-3 size-2.5" />
      </div>
      <table className="mt-1.5 mr-px w-[165px] shrink-0 table-fixed border-collapse bg-[#fffff0] text-left text-black">
        <thead>
          <tr className="h-[18px] bg-white">
            <th className="w-[68px] border-r border-[#dcdcdc] pl-[5px] font-normal">Description</th>
            <th className="w-[52px] border-r border-[#dcdcdc] pl-1 font-normal">Summary</th>
            <th />
          </tr>
        </thead>
        <tbody>
          <tr className="h-[13px] border-y border-[#adb3b9]">
            <td className="border-r border-[#efc9c0] p-0">
              <span className="flex items-center whitespace-nowrap"><Icon name="houseGreen" className="ml-px size-2.5" />SUPERFICIE PF</span>
            </td>
            <td className="border-r border-[#dcdcdc] p-0 pl-px whitespace-nowrap">146, 5.000m -</td>
            <td />
          </tr>
          {['a', 'b'].map(key => (
            <tr key={key} className="h-[13px] border-b border-[#adb3b9]">
              <td className="border-r border-[#efc9c0]" />
              <td className="border-r border-[#dcdcdc]" />
              <td />
            </tr>
          ))}
          <tr className="h-1 bg-[#e4f8dc]"><td colSpan={3} /></tr>
        </tbody>
      </table>
    </div>
    <div className="flex w-[14px] flex-col pt-[17px]">
      <SideTab label="Prospector" active className="h-20" />
      <SideTab label="Settings" className="h-[83px]" />
      <SideTab label="Survey" className="h-[78px]" />
      <SideTab label="Toolbox" className="h-[83px]" />
    </div>
  </aside>
);

const subassemblies = [
  { label: 'BasicLane', art: lane('#8b8e90') },
  { label: 'BasicLaneTransition', art: <><path d="M4 17L12 6h9l-4 8-6 3z" fill="#7b7e80" /><path d="M3 17h8l8-5v3l-8 5H3z" fill="#d5d6d6" /><path d="M9 14l6-7" stroke="#b9bcbe" /></> },
  { label: 'GenericPavementStructure', art: <><path d="M0 3h24v14H0z" fill="#6dbb8b" /><path d="M1 16L17 3h7v11l-5 3z" fill="#808386" /><path d="M0 15l19 1 5-3v5l-4 3H0z" fill="#ddd9d0" /><path d="M0 18h21l3-3v3l-3 4H0z" fill="#ae8656" /><path d="M6 16L19 4" stroke="#eceded" /></> },
  { label: 'ShapeTrapezoidal', art: <><path d="M1 14L10 4l13 2-6 8z" fill="#f7f8f8" /><path d="M1 14h16l6-8v4l-7 9H2z" fill="#d0d2d4" /></> },
  { label: 'BasicShoulder', art: <><path d="M4 17L14 5h6l-9 12z" fill="#8b8e90" /><path d="M4 17h7l9-12v3l-8 12H4z" fill="#dddede" /></> },
  { label: 'BasicCurb', art: <><path d="M5 10l9-7 5-1-9 8v12H5z" fill="#f4f5f5" /><path d="M10 10l9-8v12l-9 8z" fill="#c8cacc" /></>, selected: true },
  { label: 'BasicCurbAndGutter', art: <><path d="M1 11l9-8h5v7l4-4h4v6L11 22H1z" fill="#f1f2f2" /><path d="M6 11l9-8v6l-8 8z" fill="#bfc1c4" /><path d="M11 17l12-9v5l-12 9z" fill="#d4d5d7" /></> },
];

const References = () => (
  <div className="flex h-[271px] shrink-0 flex-col">
    <PanelTitle title="EXTERNAL REFERENCES" />
    <div className="flex h-[34px] shrink-0 items-center pl-[6px] text-[#dfe3e8]">
      <IconButton name="dwg" />
      <IconButton name="caret" className="mx-[3px]" icon="size-2" />
      <IconButton name="refresh" className="ml-px" />
      <IconButton name="caret" className="mx-[3px]" icon="size-2" />
      <IconButton name="path" />
      <IconButton name="caret" className="mx-1" icon="size-2" />
      <IconButton name="help" className="ml-0.5" />
    </div>
    <div className="mr-1.5 ml-1 flex h-[115px] shrink-0 flex-col border border-[#28303a]">
      <h3 className="flex h-[14px] items-center gap-0.5 bg-[#252d37] px-[5px] font-bold text-[#e8ebee]">
        <span className="flex-1">File References</span>
        <Icon name="list" className="size-2.5" />
        <Icon name="treeList" className="size-2.5" />
      </h3>
      <table className="w-full table-fixed border-collapse text-left whitespace-nowrap text-[#d5dae0]">
        <thead>
          <tr className="h-[15px] border-b border-[#2b333e]">
            <th className="w-3 border-r border-[#2b333e]" />
            <th className="w-[64px] border-r border-[#2b333e] p-0 pl-1 font-normal">
              <span className="flex items-center">Reference ...<Icon name="caret" className="ml-1 size-2 rotate-180" /></span>
            </th>
            <th className="p-0 pl-1 font-normal">Status</th>
          </tr>
        </thead>
        <tbody>
          <tr className="h-[14px]">
            <td className="p-0"><Icon name="dwg" className="size-[11px]" /></td>
            <td className="p-0 pl-px">H11D48 SUBEN...</td>
            <td className="p-0 pl-2.5">Opene</td>
          </tr>
        </tbody>
      </table>
      <div className="mt-auto flex h-3 items-center bg-[#f0f0f0] text-[#161616]">
        <Icon name="chevLeft" className="size-2.5" />
        <div className="h-2.5 w-[31px] bg-[#cdcdcd]" />
        <Icon name="chevRight" className="ml-auto size-2.5" />
      </div>
    </div>
    <div className="flex h-[6px] shrink-0 items-center justify-center gap-px pr-0.5">
      {[0, 1, 2, 3, 4].map(i => <span key={i} className="h-px w-0.5 bg-[#d5dae0]" />)}
    </div>
    <div className="mr-1.5 ml-1 h-[75px] shrink-0 border border-[#28303a]">
      <h3 className="flex h-[14px] items-center gap-0.5 bg-[#252d37] pr-px pl-[5px] font-bold text-[#e8ebee]">
        <span className="flex-1">Details</span>
        <Icon name="details" className="size-2.5" />
        <Icon name="preview" className="size-2.5" />
        <Icon name="caret" className="ml-0.5 size-2.5" />
      </h3>
    </div>
  </div>
);

const ToolPalettes = () => (
  <div className="flex min-h-0 flex-1">
    <div className="w-[108px]">
      <PanelTitle title="TOOL PALETTES - ..." />
      <div className="mt-1.5 flex">
        <span className="ml-0.5 h-[139px] w-[3px] shrink-0 bg-[#29313c]" />
        <div className="flex-1 pl-1">
          <p className="mr-1 h-10 border-b border-[#36404d] pt-1.5 leading-[11px] text-[#a8afb9]">Metric Basic<br />Subassemblies</p>
          <ul className="mt-[7px] pl-[3px]">
            {subassemblies.map(item => (
              <li key={item.label} className="flex h-7 items-center">
                <button className={`flex h-[25px] w-[94px] items-center pr-1 text-left ${item.selected ? 'bg-[#29313c]' : ''}`}>
                  <svg viewBox="0 0 24 24" className="mx-px size-[21px] shrink-0" aria-hidden="true">{item.art}</svg>
                  <span className="min-w-0 flex-1 pl-0.5 leading-[11px] break-all text-[#d5dae0]">{item.label}</span>
                </button>
              </li>
            ))}
          </ul>
        </div>
      </div>
    </div>
    <div className="flex w-[13px] flex-col pt-4">
      <SideTab label="Assem..." className="h-[38px]" />
      <SideTab label="Basic" active className="h-[38px]" />
      <SideTab label="Lanes" className="h-[38px]" />
      <SideTab label="Should..." className="h-[38px]" />
      <SideTab label="Medians" className="h-[38px]" />
      <SideTab label="Curbs" className="h-[46px] pb-2" />
    </div>
  </div>
);

const nodes = [[7, 8], [82, 8], [125, 96], [200, 96], [243, 8], [318, 8], [318, 23], [252, 23], [210, 111], [115, 111], [72, 23], [7, 23]];

const Canvas = () => (
  <main className="relative min-w-0 flex-1 bg-[#212830]">
    <p className="px-0.5 pt-1 leading-3 text-[#dde1e5]">[−][Top][2D Wireframe]</p>

    <svg viewBox="0 0 330 120" className="absolute top-[191px] left-[144px] h-[120px] w-[330px]" aria-hidden="true">
      <path d="M7 8h75l43 88h75l43-88h75v15h-66l-42 88" fill="none" stroke="#c9a3ae" strokeWidth="2" />
      <path d="M7 8v15h65l43 88h95" fill="none" stroke="#6ea3d0" strokeWidth="2" />
      {nodes.map(([x, y]) => <rect key={`${x}-${y}`} x={x - 2} y={y - 2} width="4" height="4" rx="1" fill="#dce2e9" />)}
      <rect x="232" y="62" width="4" height="4" fill="#212830" stroke="#fff" />
    </svg>
    <div role="tooltip" className="absolute top-[266px] left-[389px] flex h-[15px] w-[147px] items-center border border-black bg-[#96999c] pl-0.5 whitespace-nowrap text-[#111]">
      Select a subassembly point/link/shape:
    </div>

    <svg viewBox="0 0 90 90" className="absolute top-[12px] right-[10px] size-[90px]" aria-hidden="true">
      <circle cx="45" cy="44" r="36" fill="none" stroke="#454b52" strokeWidth="8" />
      <path d="M28 27h34v34H28z" fill="#b6b8ba" />
      <path d="M33 32h24v24H33z" fill="#a9abad" />
      <g fill="#b9bdc1" fontFamily="Liberation Sans, sans-serif" fontSize="13" fontWeight="bold" textAnchor="middle">
        <text x="45" y="11">N</text>
        <text x="45" y="86">S</text>
        <text x="8" y="48">W</text>
        <text x="83" y="48">E</text>
        <text x="45" y="47" fontSize="8" fill="#3a3e43">TOP</text>
      </g>
    </svg>
    <button className="absolute top-[114px] right-[39px] flex h-3 w-8 items-center rounded-sm border border-[#a6a9af] bg-[#92969e] pl-0.5 text-[#5d626b]">WCS</button>

    <svg viewBox="0 0 60 60" className="absolute bottom-2 left-2 size-[60px]" fill="none" stroke="#d5d8db" aria-hidden="true">
      <path d="M6 13v38M9 54h31M3 51h6v6H3zM7 9l4 5 4-5M11 14v5M43 46l8 8M51 46l-8 8" />
    </svg>

    <div className="absolute bottom-0 left-[169px] w-[616px] font-['DejaVu_Sans_Mono',monospace]">
      <ul className="flex flex-col items-start gap-[3px] pb-[3px] pl-10 leading-[10px] text-[#d5d8da]">
        <li className="bg-[#474d53] px-px text-[#a5a9ac]">ADDSUBASSEMBLYCODE</li>
        <li className="bg-[#474d53] px-px">Select a Subassembly:</li>
        <li className="bg-[#474d53] px-px">Enter code: CA5</li>
      </ul>
      <div className="flex h-[17px] items-center bg-white text-[#111]">
        <div className="flex h-full w-9 items-center gap-[5px] bg-[#2a313b] pl-1 text-[#e4e7ea]">
          <span className="h-3 w-[3px] border-x border-dotted border-[#c5cad0]" />
          <IconButton name="close" icon="size-2" />
          <IconButton name="wrench" icon="size-2.5" />
        </div>
        <Icon name="prompt" className="ml-0.5 size-2.5" />
        <Icon name="dot" className="size-2.5" />
        <label htmlFor="command" className="ml-px whitespace-nowrap"><b>ADDSUBASSEMBLYCODE</b> Select a subassembly point/link/shape:</label>
        <input id="command" className="min-w-0 flex-1" />
        <Icon name="dot" className="size-2.5 rotate-180" />
      </div>
    </div>
  </main>
);

const Divider = () => <span className="my-[3px] h-px w-3 shrink-0 bg-[#dfe3e7]" />;

const ToolStrip: React.FC<{ names: string[]; className: string }> = ({ names, className }) => (
  <div className={`flex shrink-0 flex-col ${className}`}>
    {names.map(name => <IconButton key={name} name={name} className="min-h-0 flex-1" />)}
  </div>
);

const TransparentTools = () => (
  <aside className="w-[22px] shrink-0 bg-[#3b4453] pt-[3px] pl-1">
    <div className="flex w-[14px] flex-col items-center border border-[#28303a] bg-[#333c49]">
      <span className="mt-0.5 h-0.5 w-2.5 bg-[#69727f]" />
      <ToolStrip names={['tri1', 'tri2', 'ptStar', 'ptPath', 'ptSheet', 'globe', 'globe2', 'ptBlue', 'ptA', 'ptCursor', 'ptSearch', 'ptFlag', 'dashCurve']} className="h-[189px]" />
      <Divider />
      <ToolStrip names={['ptCursor']} className="h-3" />
      <Divider />
      <ToolStrip names={['dashLoop', 'discLoop', 'ptLoop']} className="h-10" />
      <Divider />
      <ToolStrip names={['dashAngle', 'dashBox', 'tri2', 'angle', 'noCircle', 'ptGold', 'curveCalc']} className="h-[100px]" />
      <span className="my-[3px] h-0.5 w-2.5 shrink-0 bg-[#69727f]" />
      <ToolStrip names={['ptCursor', 'ptSheet', 'ptBlue']} className="h-[42px]" />
    </div>
  </aside>
);

const StatusBar = () => (
  <footer className="flex h-[18px] shrink-0 items-center border-t border-[#39424f]">
    <nav className="flex h-full items-start pl-[9px] text-[#aab1ba]">
      <button className="h-[13px] w-[37px] rounded-b-md bg-[#3b4453] font-bold text-white">Model</button>
      <button className="ml-0.5 h-[13px] w-10 rounded-b-md bg-[#2c343f]">Layout1</button>
      <button className="ml-1 h-[13px] w-10 rounded-b-md bg-[#2c343f]">Layout2</button>
      <IconButton name="plus" className="ml-1 h-[13px] w-4 rounded-b-md bg-[#2c343f]" icon="size-2.5" />
    </nav>
    <div className="ml-auto flex h-full items-center bg-[#2f3743] text-[#e4e7ea]">
      <span className="pr-1.5 pl-[17px] whitespace-nowrap">729418.875, 3222404.406, 0.000</span>
      <button className="mr-[5px] w-[31px] border-l border-[#222a33]">MODEL</button>
      <IconButton name="grid" className="w-4" icon="size-2.5" />
      <IconButton name="snap" className="w-4" icon="size-2.5" />
      <IconButton name="caret" className="w-3" icon="size-2" />
      <IconButton name="dyn" className="h-[15px] w-[15px] bg-[#4b80b2]" icon="size-2.5" />
      <IconButton name="ortho" className="ml-px h-[15px] w-[15px] bg-[#4b80b2]" icon="size-2.5" />
      <IconButton name="polar" className="w-4" icon="size-2.5" />
      <IconButton name="caret" className="w-2.5" icon="size-2" />
      <IconButton name="iso" className="w-4" icon="size-2.5" />
      <IconButton name="caret" className="w-2" icon="size-2" />
      <IconButton name="angle" className="w-[18px]" icon="size-2.5" />
      <IconButton name="osnap" className="h-[15px] w-[15px] bg-[#4b80b2]" icon="size-2.5" />
      <IconButton name="caret" className="w-3" icon="size-2" />
      <IconButton name="quick" className="w-[18px]" icon="size-2.5" />
      <IconButton name="anno" className="h-[15px] w-4 bg-[#4b80b2]" icon="size-2.5" />
      <IconButton name="annoAuto" className="w-4" icon="size-2.5" />
      <IconButton name="annoPlain" className="w-4" icon="size-2.5" />
      <button className="flex w-9 items-center justify-center">1:1000<Icon name="caret" className="size-2" /></button>
      <IconButton name="gear" className="w-4" icon="size-2.5" />
      <IconButton name="caret" className="w-3" icon="size-2" />
      <IconButton name="bigPlus" className="w-[18px]" icon="size-2.5" />
      <button className="flex w-[46px] items-center justify-center gap-1 border-l border-[#222a33]"><Icon name="stack" className="size-2.5" />3.500</button>
      <IconButton name="isolate" className="w-[18px]" icon="size-[11px]" />
      <IconButton name="clean" className="w-[18px] border-l border-[#222a33]" icon="size-2.5" />
      <IconButton name="menu" className="w-4" icon="size-2.5" />
    </div>
  </footer>
);

const App: React.FC = () => (
  <div className="flex h-screen w-full flex-col overflow-hidden border-y-14 border-black bg-[#222931] font-['Lato',sans-serif] text-[8px] leading-3 text-[#b9bfc7]">
    <TitleBar />
    <nav className="flex h-[14px] shrink-0 items-center border-b border-[#343c46]">
      {menus.map(([label, width]) => (
        <button key={label} className={`flex shrink-0 justify-center whitespace-nowrap ${width}`}>{label}</button>
      ))}
      <div className="ml-auto flex text-[#d5dae0]">
        <IconButton name="min" className="w-3" icon="size-2" />
        <IconButton name="restore" className="w-3" icon="size-2.5" />
        <IconButton name="close" className="w-3" icon="size-2" />
      </div>
    </nav>
    <nav className="flex h-4 shrink-0 items-end pl-0.5">
      {ribbonTabs.map(([label, width]) => (
        <button key={label} className={`flex h-[14px] shrink-0 items-center justify-center whitespace-nowrap ${width} ${label === 'Home' ? 'bg-[#3b4453] text-white' : ''} ${label === 'Geolocation' ? 'bg-[#0e6c96] text-white' : ''}`}>{label}</button>
      ))}
      <IconButton name="ribbonBox" className="ml-3.5 h-[14px]" icon="size-2.5" />
      <IconButton name="dot" className="h-[14px]" icon="size-2" />
    </nav>
    <Ribbon />
    <nav className="flex h-[19px] shrink-0 items-end border-b-2 border-[#3b4453] pl-3.5">
      <button className="h-[14px] w-[84px] rounded-t-md bg-[#2c343f] pl-2 text-left">Start</button>
      <div className="flex h-[14px] w-[118px] items-center rounded-t-md bg-[#3b4453] pl-[5px] font-bold text-white">
        <button className="whitespace-nowrap">H11D48 SUBENSAMBLE*</button>
        <IconButton name="close" className="ml-1" icon="size-[7px]" />
      </div>
      <IconButton name="plus" className="ml-1 h-[14px] w-4 rounded-t-md bg-[#2c343f]" icon="size-2.5" />
    </nav>
    <div className="flex min-h-0 flex-1">
      <Toolspace />
      <aside className="flex w-[126px] shrink-0 flex-col border-r-2 border-[#2c343f] bg-[#3b4453] pt-[3px] pl-0.5">
        <References />
        <ToolPalettes />
      </aside>
      <Canvas />
      <TransparentTools />
    </div>
    <StatusBar />
  </div>
);

export default App;
